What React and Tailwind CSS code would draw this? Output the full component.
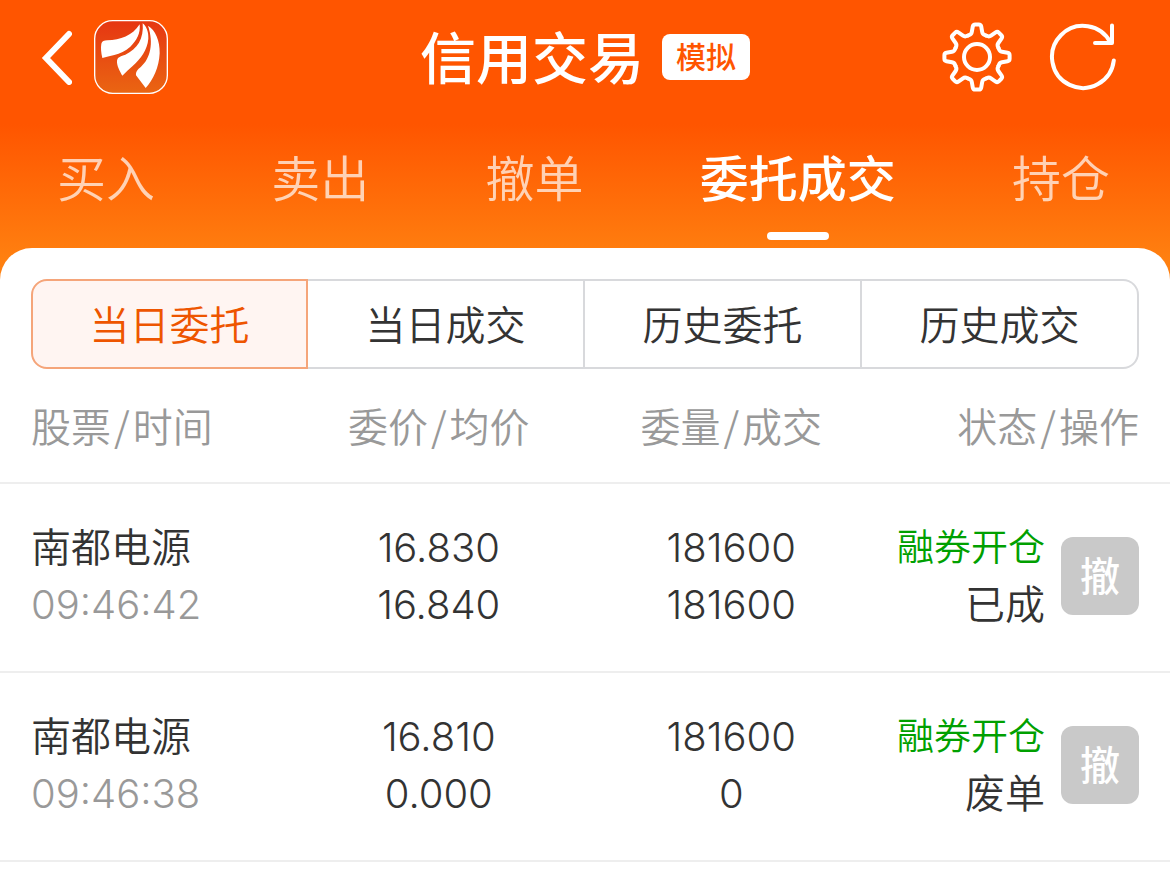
const tabs = ['买入', '卖出', '撤单', '委托成交', '持仓']

const segments = ['当日委托', '当日成交', '历史委托', '历史成交']

const columns = [
  { first: '股票', second: '时间', align: 'text-left pl-[31px]' },
  { first: '委价', second: '均价', align: 'text-center' },
  { first: '委量', second: '成交', align: 'text-center' },
  { first: '状态', second: '操作', align: 'text-right pr-[31px]' },
]

const orders = [
  {
    name: '南都电源',
    time: '09:46:42',
    price: '16.830',
    avgPrice: '16.840',
    amount: '181600',
    filled: '181600',
    action: '融券开仓',
    status: '已成',
  },
  {
    name: '南都电源',
    time: '09:46:38',
    price: '16.810',
    avgPrice: '0.000',
    amount: '181600',
    filled: '0',
    action: '融券开仓',
    status: '废单',
  },
]

const toothAngles = [0, 45, 90, 135, 180, 225, 270, 315]

function BackIcon() {
  return (
    <svg className="w-8 h-14" viewBox="0 0 32 56" fill="none" stroke="white" strokeWidth="6" strokeLinecap="round">
      <path d="M29 5 6 29 29 53" />
    </svg>
  )
}

function BrandLogo() {
  return (
    <svg className="w-[74px] h-[74px]" viewBox="222 60 222 222">
      <defs>
        <linearGradient id="brand" x1="0" y1="0" x2="0" y2="1">
          <stop offset="0" stopColor="#e63612" />
          <stop offset="1" stopColor="#ea6512" />
        </linearGradient>
      </defs>
      <rect x="224" y="62" width="218" height="218" rx="54" fill="url(#brand)" stroke="white" strokeWidth="4" />
      <g fill="white">
        <path d="M359 73C362 100 350 122 331 140C316 154 300 160 283 165C270 168 258 171 247 174C243 157 242 143 244 131C246 123 252 121 262 121C302 120 336 108 359 73Z" />
        <path d="M368 70C380 80 386 96 385 116C382 150 362 176 338 198C327 208 317 217 307 227C299 212 290 197 291 182C293 170 303 169 316 164C352 148 372 116 368 70Z" />
        <path d="M384 77C406 90 420 122 419 160C417 202 400 240 377 264L348 226C347 213 354 208 363 200C391 175 402 130 384 77Z" />
      </g>
    </svg>
  )
}

function GearIcon() {
  return (
    <svg className="w-[72px] h-[72px]" viewBox="-36 -36 72 72" fill="none" stroke="white" strokeWidth="4" strokeLinecap="round">
      <circle r="13" />
      {toothAngles.map((angle) => (
        <path
          key={angle}
          transform={`rotate(${angle})`}
          d="M-8.9-21.5-8-21.9Q-5.6-22.6-5.2-25L-4.2-30.6Q-3.8-32.6-1.8-32.6H1.8Q3.8-32.6 4.2-30.6L5.2-25Q5.6-22.6 8-21.9L8.9-21.5"
        />
      ))}
    </svg>
  )
}

function RefreshIcon() {
  return (
    <svg className="w-[72px] h-[72px]" viewBox="-36 -36 72 72" fill="none" stroke="white" strokeWidth="4" strokeLinecap="round" strokeLinejoin="round">
      <path d="M30.8 3.5A31 31 0 1 1 27.7-14" />
      <path d="M29-31.5V-14H12" />
    </svg>
  )
}

export default function App() {
  return (
    <div className="min-h-screen bg-white font-['Inter','Noto_Sans_CJK_SC',sans-serif] text-[#333333]">
      <div className="bg-[linear-gradient(#ff5500_0,#ff5500_124px,#ff8010_260px)]">
        {/* Title bar */}
        <header className="grid grid-cols-[1fr_auto_1fr] items-center h-[114px]">
          <div className="flex items-center gap-[22px] pl-10">
            <button aria-label="返回">
              <BackIcon />
            </button>
            <BrandLogo />
          </div>
          <div className="flex items-center gap-[18px] text-white">
            <h1 className="pt-1 text-[56px] leading-[72px] font-medium">信用交易</h1>
            <span className="px-[14px] rounded-lg bg-white text-[30px] leading-[46px] font-medium text-[#ff5500]">模拟</span>
          </div>
          <div className="flex items-center justify-end gap-[34px] pr-[51px]">
            <button aria-label="设置">
              <GearIcon />
            </button>
            <button aria-label="刷新">
              <RefreshIcon />
            </button>
          </div>
        </header>

        {/* Main tabs */}
        <nav className="flex justify-between pl-[57px] pr-[60px] pt-[30px] pb-2">
          {tabs.map((tab) => {
            const active = tab === '委托成交'
            return (
              <button key={tab} className="flex flex-col items-center gap-4">
                <span className={`text-[49px] leading-[72px] ${active ? 'font-medium text-white' : 'font-[350] text-white/70'}`}>
                  {tab}
                </span>
                <span className={`w-[62px] h-2 rounded-full ${active ? 'bg-white' : 'bg-transparent'}`} />
              </button>
            )
          })}
        </nav>

        <main className="rounded-t-[32px] bg-white pt-[31px]">
          {/* Order filters */}
          <div className="grid grid-cols-4 mx-[31px]">
            {segments.map((segment, i) => (
              <button
                key={segment}
                className={`h-[90px] pt-1 border-2 text-[40px] font-[350] first:rounded-l-2xl last:rounded-r-2xl ${
                  i === 0 ? 'border-[#f5a57a] bg-[#fff5f2] text-[#ee5500]' : 'border-l-0 border-[#d8d9dc]'
                }`}
              >
                {segment}
              </button>
            ))}
          </div>

          {/* Orders */}
          <table className="w-full table-fixed border-collapse text-[40px] leading-[57px] font-[350]">
            <thead>
              <tr className="border-b-2 border-[#eeeeee] text-[#999999]">
                {columns.map((column) => (
                  <th key={column.first} className={`py-7 font-[350] font-['Noto_Sans_CJK_SC',sans-serif] ${column.align}`}>
                    {column.first}
                    <span className="mx-[3px]">/</span>
                    {column.second}
                  </th>
                ))}
              </tr>
            </thead>
            <tbody>
              {orders.map((order) => (
                <tr key={order.time} className="border-b-2 border-[#eeeeee]">
                  <td className="pt-[35px] pb-[38px] pl-[31px]">
                    <p>{order.name}</p>
                    <p className="text-[#999999]">{order.time}</p>
                  </td>
                  <td className="pt-[35px] pb-[38px] text-center">
                    <p>{order.price}</p>
                    <p>{order.avgPrice}</p>
                  </td>
                  <td className="pt-[35px] pb-[38px] text-center">
                    <p>{order.amount}</p>
                    <p>{order.filled}</p>
                  </td>
                  <td className="pt-[35px] pb-[38px] pr-[31px]">
                    <div className="flex items-center justify-end gap-4 text-right">
                      <div>
                        <p className="text-[37px] text-[#00a000]">{order.action}</p>
                        <p>{order.status}</p>
                      </div>
                      <button className="w-[78px] h-[78px] rounded-xl bg-[#c9c9c9] font-medium text-white">撤</button>
                    </div>
                  </td>
                </tr>
              ))}
            </tbody>
          </table>
        </main>
      </div>
    </div>
  )
}
